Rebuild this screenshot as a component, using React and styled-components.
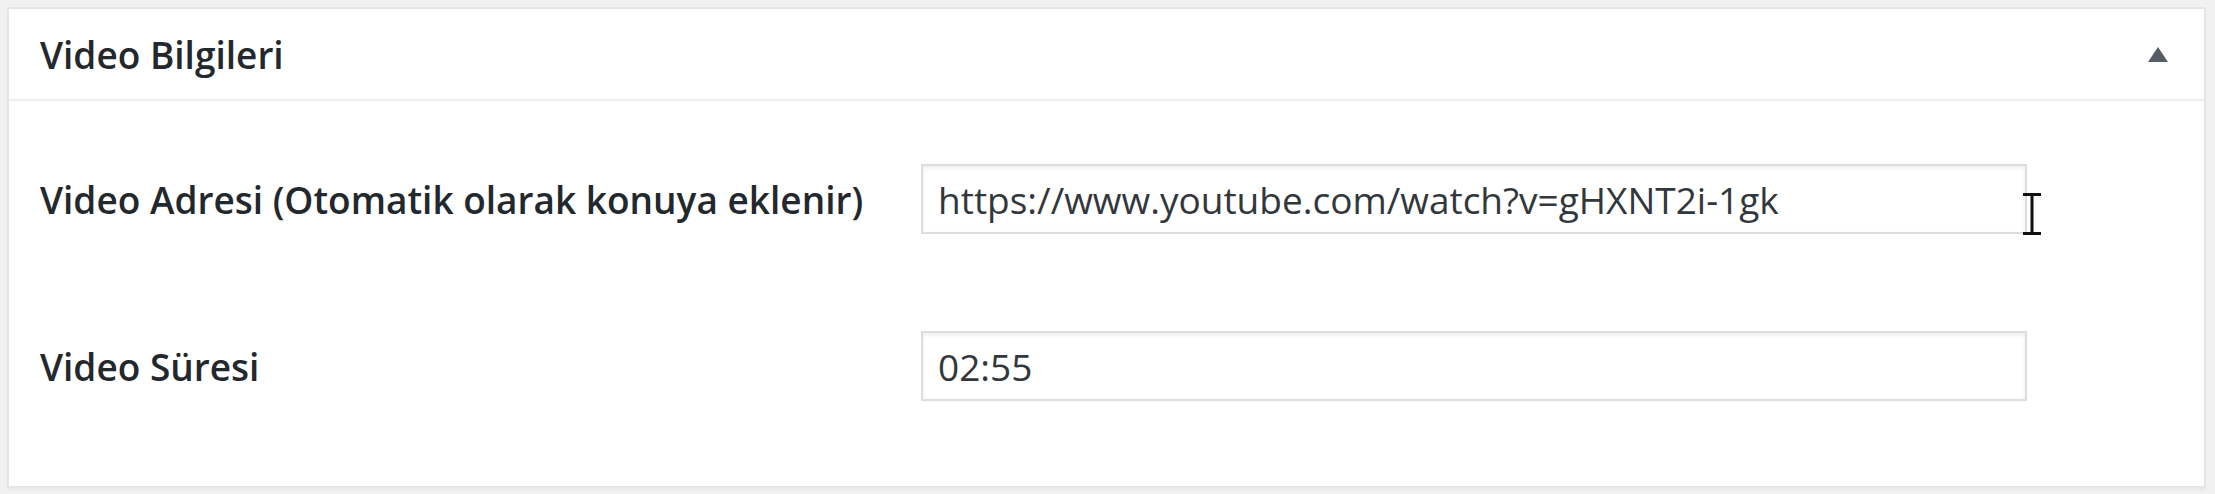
import React from "react";
import styled, { createGlobalStyle } from "styled-components";

const GlobalStyle = createGlobalStyle`
	html, body {
		margin: 0;
		padding: 0;
		background: #f1f1f1;
	}
	body {
		font-family: "Open Sans", "Noto Sans", sans-serif;
	}
`;

const Page = styled.div`
	width: 2215px;
	height: 494px;
	box-sizing: border-box;
	padding: 7px 9px 6px 7px;
`;

const Panel = styled.div`
	background: #fff;
	border: 2px solid #e5e5e5;
	box-shadow: 0 2px 2px rgba(0, 0, 0, 0.04);
	height: 100%;
	box-sizing: border-box;
	display: flex;
	flex-direction: column;
`;

const Header = styled.div`
	height: 90px;
	display: flex;
	align-items: center;
	justify-content: space-between;
	padding: 0 36px 0 31px;
	border-bottom: 2px solid #eee;
`;

const Title = styled.h2`
	margin: 0;
	font-size: 37px;
	font-weight: 600;
	color: #23282d;
`;

const Toggle = styled.svg`
	width: 20px;
	height: 15px;
	display: block;
`;

const Body = styled.div`
	padding: 63px 0 0 31px;
	display: flex;
	flex-direction: column;
	gap: 97px;
`;

const Row = styled.div`
	display: grid;
	grid-template-columns: 881px 1106px;
	align-items: center;
	height: 70px;
`;

const Label = styled.label`
	font-size: 37px;
	font-weight: 600;
	color: #23282d;
`;

const Field = styled.div`
	position: relative;
	height: 70px;
`;

const Input = styled.input`
	width: 100%;
	height: 100%;
	box-sizing: border-box;
	border: 2px solid #ddd;
	box-shadow: inset 0 2px 4px rgba(0, 0, 0, 0.07);
	background: #fff;
	padding: 0 15px;
	font-family: "Open Sans", "Noto Sans", sans-serif;
	font-size: 37px;
	color: #32373c;
	outline: none;
`;

const Cursor = styled.svg`
	position: absolute;
	left: 1101px;
	top: 29px;
	width: 20px;
	height: 42px;
`;

export default function App() {
	return (
		<>
			<GlobalStyle />
			<Page>
				<Panel>
					<Header>
						<Title>Video Bilgileri</Title>
						<Toggle viewBox="0 0 20 15">
							<polygon points="10,0 20,15 0,15" fill="#555d66" />
						</Toggle>
					</Header>
					<Body>
						<Row>
							<Label>Video Adresi (Otomatik olarak konuya eklenir)</Label>
							<Field>
								<Input readOnly value="https://www.youtube.com/watch?v=gHXNT2i-1gk" />
								<Cursor viewBox="0 0 20 42">
									<path d="M1 1.5h7M12 1.5h7M10 3v36M1 40.5h7M12 40.5h7" stroke="#111" strokeWidth="3" fill="none" />
									<path d="M8 1.5h4M8 40.5h4" stroke="#111" strokeWidth="3" />
								</Cursor>
							</Field>
						</Row>
						<Row>
							<Label>Video Süresi</Label>
							<Field>
								<Input readOnly value="02:55" />
							</Field>
						</Row>
					</Body>
				</Panel>
			</Page>
		</>
	);
}
